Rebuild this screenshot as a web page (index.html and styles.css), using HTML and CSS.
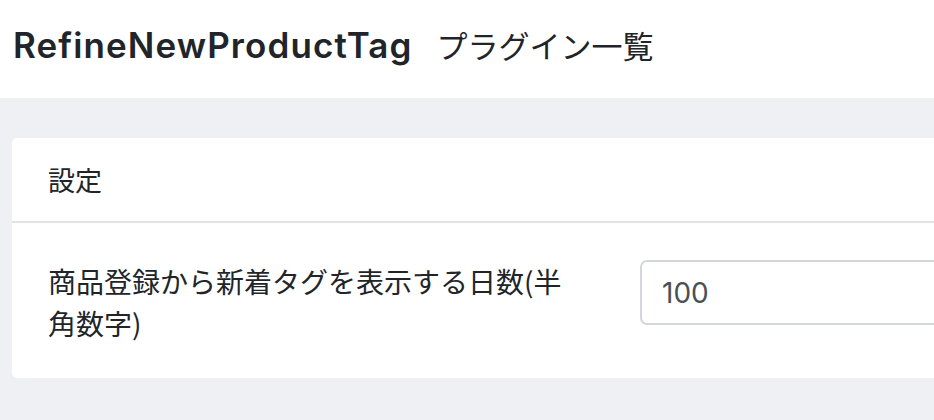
FILE: index.html
```html
<!DOCTYPE html>
<html lang="ja">
<head>
<meta charset="utf-8">
<title>RefineNewProductTag</title>
<link rel="stylesheet" href="styles.css">
</head>
<body>
<header class="page-header">
  <h1 class="page-title">RefineNewProductTag</h1>
  <span class="page-sub">プラグイン一覧</span>
</header>
<main class="content">
  <section class="card">
    <div class="card-header">設定</div>
    <div class="card-body">
      <label class="field-label" for="days">商品登録から新着タグを表示する日数(半角数字)</label>
      <div class="field-control">
        <input id="days" class="text-input" type="text" value="100">
      </div>
    </div>
  </section>
</main>
</body>
</html>
```
FILE: styles.css
```css
* { box-sizing: border-box; }
html, body { margin: 0; padding: 0; }
body {
  width: 934px;
  height: 420px;
  overflow: hidden;
  font-family: Inter, "Noto Sans CJK JP", sans-serif;
  color: #212529;
  background: #eff0f4;
}
.page-header {
  background: #fff;
  height: 98px;
  display: flex;
  align-items: baseline;
  gap: 24px;
  padding: 21px 0 0 13px;
}
.page-title {
  margin: 0;
  font-size: 35px;
  font-weight: 600;
  letter-spacing: 1.1px;
  line-height: 48px;
  color: #212529;
}
.page-sub {
  font-family: "Noto Sans CJK JP", sans-serif;
  font-size: 31px;
  font-weight: 400;
  line-height: 48px;
}
.content {
  padding: 40px 0 0 12px;
}
.card {
  background: #fff;
  border-radius: 5px 0 0 5px;
  width: 940px;
  height: 240px;
}
.card-header {
  height: 85px;
  padding: 0 36px;
  display: flex;
  align-items: center;
  font-family: "Noto Sans CJK JP", sans-serif;
  font-size: 27px;
  border-bottom: 2px solid #e1e2e5;
}
.card-body {
  display: flex;
  align-items: flex-start;
  padding: 37px 0 0 36px;
}
.field-label {
  width: 528px;
  font-family: "Noto Sans CJK JP", sans-serif;
  font-size: 28px;
  line-height: 42px;
}
.field-control {
  margin-left: 64px;
  flex: 1;
}
.text-input {
  display: block;
  width: 100%;
  height: 65px;
  border: 2px solid #d3d6db;
  border-radius: 7px;
  padding: 0 20px;
  font-family: Inter, sans-serif;
  font-size: 28px;
  color: #495057;
  background: #fff;
  outline: none;
}
```
